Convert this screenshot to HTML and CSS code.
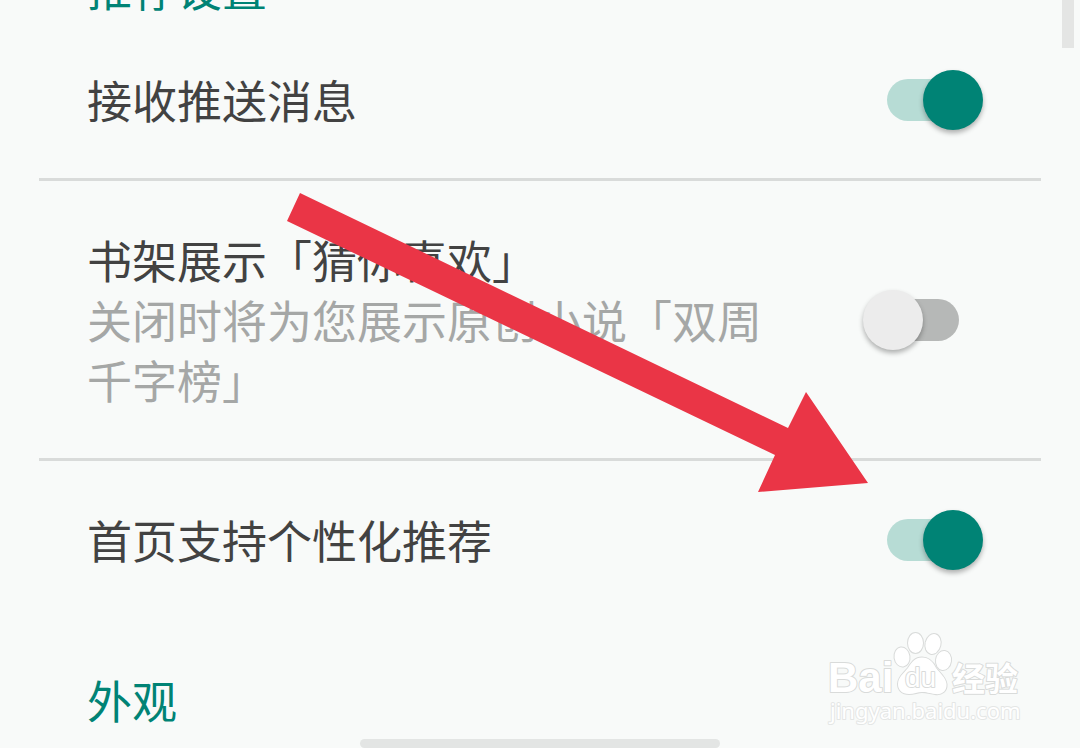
FILE: index.html
```
<!DOCTYPE html>
<html lang="zh-CN">
<head>
    <meta charset="UTF-8">
    <meta name="viewport" content="width=device-width, initial-scale=1.0">
    <link rel="stylesheet" href="styles.css">
    <title>设置</title>
</head>
<body>

    <main class="settings">
        <h2 class="section-title">推荐设置</h2>
        <div class="setting">
            <label class="setting-text" for="push">接收推送消息</label>
            <input class="switch" type="checkbox" id="push" checked>
        </div>
        <div class="setting">
            <label class="setting-text" for="guess">
                书架展示「猜你喜欢」
                <span class="setting-summary">关闭时将为您展示原创小说「双周千字榜」</span>
            </label>
            <input class="switch" type="checkbox" id="guess">
        </div>
        <div class="setting">
            <label class="setting-text" for="personal">首页支持个性化推荐</label>
            <input class="switch" type="checkbox" id="personal" checked>
        </div>

        <h2 class="section-title">外观</h2>
    </main>

    <svg class="arrow" viewBox="0 0 581 299" aria-hidden="true">
        <path fill="#ea3546" d="M13 0 L501 235 L519 199 L581 290 L471 299 L488 262 L0 28 Z"/>
    </svg>

    <svg class="watermark" viewBox="0 0 200 100">
        <ellipse cx="74" cy="27" rx="7.5" ry="9.5" transform="rotate(-8 74 27)"/>
        <ellipse cx="87.5" cy="13" rx="7.5" ry="10"/>
        <ellipse cx="105" cy="14" rx="7.5" ry="10" transform="rotate(14 105 14)"/>
        <ellipse cx="115.5" cy="30.5" rx="7.5" ry="9.5" transform="rotate(8 115.5 30.5)"/>
        <path d="M94 27.5 C101 27.5 105 32 108 38 C112 43 118 48 118.5 54 C119 61 114 65 107 64 C101 63 98 62 94 62 C90 62 86 64 81 64 C74 64 70 60 70 54 C70 47 76 43 80 38 C84 32 87 27.5 94 27.5 Z"/>
        <text class="watermark-name" x="0" y="62">Bai</text>
        <text class="watermark-du" x="77" y="57">du</text>
        <text class="watermark-cn" x="124" y="61">经验</text>
        <text class="watermark-url" x="2" y="89">jingyan.baidu.com</text>
    </svg>

    <div class="scroll-thumb"></div>
    <div class="home-bar"></div>

</body>
</html>
```

FILE: styles.css
```
* {
    margin: 0;
    padding: 0;
    box-sizing: border-box;
}

body {
    min-height: 100vh;
    overflow: hidden;
    background-color: #f8faf9;
    color: #424242;
    font-family: "Noto Sans CJK SC", sans-serif;
    font-size: 45px;
    line-height: 60px;
}

/* scrolled so the first heading is cut by the top edge */
.settings {
    margin: -42px 39px 0;
}
.section-title {
    margin-bottom: 3px;
    padding-left: 48px;
    color: #008375;
    font-size: 45px;
    font-weight: 400;
}
.setting + .section-title {
    margin-top: 52px;
}

.setting {
    display: flex;
    align-items: center;
    justify-content: space-between;
    gap: 120px;
    padding: 49px 82px 48px 48px;
}
.setting + .setting {
    border-top: 3px solid #d9dbda;
}
.setting-summary {
    display: block;
    color: #a5a7a6;
}

.switch {
    position: relative;
    flex: none;
    width: 72px;
    height: 42px;
    border-radius: 21px;
    background-color: #b6b8b7;
    appearance: none;
    cursor: pointer;
}
.switch::before {
    content: "";
    position: absolute;
    top: -9px;
    left: -24px;
    width: 60px;
    height: 60px;
    border-radius: 50%;
    background-color: #ececec;
    box-shadow: 0 3px 5px rgba(0, 0, 0, 0.3);
}
.switch:checked {
    background-color: #b7dcd5;
}
.switch:checked::before {
    left: 36px;
    background-color: #008375;
}

.arrow {
    position: absolute;
    top: 193px;
    left: 287px;
    width: 581px;
    height: 299px;
    pointer-events: none;
}

.watermark {
    position: absolute;
    right: 52px;
    bottom: 18px;
    width: 200px;
    height: 100px;
    overflow: visible;
    fill: white;
    stroke: #d9dbda;
    stroke-width: 2px;
    stroke-linejoin: round;
    paint-order: stroke;
    font-family: "Liberation Sans", sans-serif;
    pointer-events: none;
}
.watermark-name {
    font-size: 42px;
    font-weight: bold;
}
.watermark-du {
    font-size: 28px;
}
.watermark-cn {
    font-family: "Noto Sans CJK SC", sans-serif;
    font-size: 33px;
    font-weight: 700;
}
.watermark-url {
    font-family: "Noto Sans", sans-serif;
    font-size: 22px;
    stroke: #e4e6e5;
}

.scroll-thumb {
    position: absolute;
    top: 0;
    right: 6px;
    width: 12px;
    height: 48px;
    background-color: #e4e5e4;
}

.home-bar {
    position: absolute;
    bottom: 0;
    left: 50%;
    width: 360px;
    height: 9px;
    border-radius: 5px;
    background-color: #e3e5e4;
    transform: translateX(-50%);
}
```
